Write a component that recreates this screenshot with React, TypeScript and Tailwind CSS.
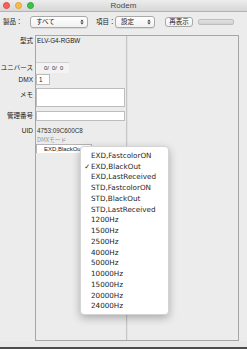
import React from 'react';

const modes = [
  'EXD,FastcolorON',
  'EXD,BlackOut',
  'EXD,LastReceived',
  'STD,FastcolorON',
  'STD,BlackOut',
  'STD,LastReceived',
  '1200Hz',
  '1500Hz',
  '2500Hz',
  '4000Hz',
  '5000Hz',
  '10000Hz',
  '15000Hz',
  '20000Hz',
  '24000Hz',
];

function Arrows() {
  return (
    <svg width="4" height="6" viewBox="0 0 4 6" className="shrink-0">
      <path d="M0.3 2.4 2 0.5 3.7 2.4Z M0.3 3.6 2 5.5 3.7 3.6Z" fill="#3a3a3a" />
    </svg>
  );
}

function Light({ color, ring }: { color: string; ring: string }) {
  return <span className={`block w-[7px] h-[7px] rounded-full border ${color} ${ring}`} />;
}

export default function App() {
  return (
    <div className="w-[247px] h-[349px] bg-[#ececec] flex flex-col overflow-hidden relative font-['Liberation_Sans','Noto_Sans_CJK_JP',sans-serif] text-[#1a1a1a]">
      {/* title bar */}
      <div className="h-[12px] shrink-0 relative flex items-center justify-center bg-gradient-to-b from-[#ededed] to-[#d6d6d6] border-b border-[#b3b3b3]">
        <div className="absolute left-[3px] top-[2px] flex gap-[5px]">
          <Light color="bg-[#fc605c]" ring="border-[#de4a45]" />
          <Light color="bg-[#fdbc40]" ring="border-[#dea236]" />
          <Light color="bg-[#34c84a]" ring="border-[#2aa53b]" />
        </div>
        <span className="text-[8px] leading-none text-[#4a4a4a]">Rodem</span>
      </div>

      {/* toolbar */}
      <div className="h-[23px] shrink-0 flex items-start pt-[4px] pl-[3px] text-[6.5px] whitespace-nowrap font-['Noto_Sans_CJK_JP',sans-serif]">
        <span className="h-[12px] flex items-center w-[27px]">製品：</span>
        <div className="h-[12px] w-[58px] flex items-center justify-between pl-[5px] pr-[3px] bg-gradient-to-b from-white to-[#f1f1f1] border border-[#a9a9a9] rounded-[3px] shadow-[0_1px_0_rgba(0,0,0,0.08)]">
          <span>すべて</span>
          <Arrows />
        </div>
        <span className="h-[12px] flex items-center ml-[8px] w-[19px] shrink-0">項目：</span>
        <div className="h-[12px] w-[40px] shrink-0 flex items-center justify-between pl-[5px] pr-[3px] bg-gradient-to-b from-white to-[#f1f1f1] border border-[#a9a9a9] rounded-[3px] shadow-[0_1px_0_rgba(0,0,0,0.08)]">
          <span>設定</span>
          <Arrows />
        </div>
        <div className="ml-[10px] h-[10px] mt-[1px] w-[28px] shrink-0 flex items-center justify-center bg-gradient-to-b from-white to-[#efefef] border border-[#a9a9a9] rounded-[3px]">
          再表示
        </div>
        <div className="ml-[5px] mt-[3px] h-[6px] w-[36px] shrink-0 bg-gradient-to-b from-[#e2e2e2] to-[#d2d2d2] border border-[#bdbdbd] rounded-[2px]" />
      </div>

      {/* main */}
      <div className="h-[306px] shrink-0 flex">
        {/* labels */}
        <div className="w-[35px] pt-[1px] pr-[2px] flex flex-col items-end text-[6.5px] font-['Noto_Sans_CJK_JP',sans-serif]">
          <div className="h-[10px] flex items-center">型式</div>
          <div className="h-[16px]" />
          <div className="h-[11px] flex items-center whitespace-nowrap">ユニバース</div>
          <div className="mt-[1px] h-[11px] flex items-center font-['Liberation_Sans',sans-serif]">DMX</div>
          <div className="mt-[3px] h-[19px] pt-[2px]">メモ</div>
          <div className="mt-[4px] h-[10px] flex items-center">管理番号</div>
          <div className="mt-[5px] h-[10px] flex items-center font-['Liberation_Sans',sans-serif]">UID</div>
        </div>

        {/* table box */}
        <div className="w-[204px] border border-[#a6a6a6] flex">
          <div className="w-[91px] border-r border-[#c6c6c6] flex flex-col text-[6.3px]">
            <div className="h-[10px] flex items-center pl-[1px]">ELV-G4-RGBW</div>
            <div className="h-[16px]" />
            <div className="h-[11px] w-[33px] flex items-center pl-[8px] bg-[#f3f3f3] border-t border-[#d0d0d0] text-[5.8px] text-[#333]">
              0/&nbsp;&nbsp;0/&nbsp;&nbsp;0
            </div>
            <div className="mt-[1px] h-[11px] w-[14px] flex items-center pl-[2px] bg-white border border-[#bdbdbd]">1</div>
            <div className="mt-[3px] h-[19px] w-[89px] bg-white border border-[#bdbdbd]" />
            <div className="mt-[4px] h-[10px] w-[89px] bg-white border border-[#bdbdbd]" />
            <div className="mt-[5px] h-[10px] flex items-center pl-[1px] text-[#333]">4753:09C600C8</div>
            <div className="h-[8px] flex items-center pl-[1px] text-[5.8px] text-[#9a9a9a] font-['Noto_Sans_CJK_JP',sans-serif]">DMXモード</div>
            <div className="h-[9px] w-[56px] flex items-center justify-between pl-[7px] pr-[2px] bg-white border-t border-x border-[#b5b5b5] text-[6px]">
              <span>EXD,BlackOu</span>
              <span className="text-[5px] leading-none">⁻</span>
            </div>
          </div>
          <div className="flex-1 border-l border-[#e2e2e2]" />
        </div>
      </div>

      {/* bottom */}
      <div className="h-[6px] shrink-0 bg-[#e8e8e8]" />
      <div className="h-[2px] shrink-0 bg-[#4d4d4d]" />

      {/* popup menu */}
      <div className="absolute left-[80px] top-[146px] w-[89px] pt-[4px] pb-[2px] bg-white rounded-[4px] shadow-[0_3px_8px_rgba(0,0,0,0.28)] border border-[#d4d4d4] font-['DejaVu_Sans',sans-serif] text-[7.2px] text-[#1c1c1c]">
        {modes.map((m, i) => (
          <div key={m} className="h-[10.75px] flex items-center">
            <span className="w-[10px] text-right pr-[1px] text-[7px]">{i === 1 ? '✓' : ''}</span>
            <span>{m}</span>
          </div>
        ))}
      </div>
    </div>
  );
}
